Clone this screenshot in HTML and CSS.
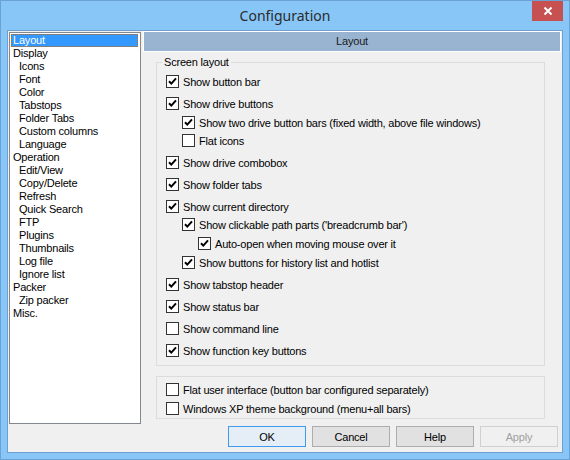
FILE: index.html
```html
<!DOCTYPE html>
<html>
<head>
<meta charset="utf-8">
<title>Configuration</title>
<link rel="stylesheet" href="styles.css">
</head>
<body>
<div class="window">
  <div class="titlebar">
    <span class="title">Configuration</span>
    <div class="close"><svg viewBox="0 0 10 10" width="10" height="10"><path d="M1.5 1.5L8.5 8.5M8.5 1.5L1.5 8.5"/></svg></div>
  </div>
  <div class="client">
    <ul class="tree">
      <li class="item selected">Layout</li>
      <li class="item">Display</li>
      <li class="item child">Icons</li>
      <li class="item child">Font</li>
      <li class="item child">Color</li>
      <li class="item child">Tabstops</li>
      <li class="item child">Folder Tabs</li>
      <li class="item child">Custom columns</li>
      <li class="item child">Language</li>
      <li class="item">Operation</li>
      <li class="item child">Edit/View</li>
      <li class="item child">Copy/Delete</li>
      <li class="item child">Refresh</li>
      <li class="item child">Quick Search</li>
      <li class="item child">FTP</li>
      <li class="item child">Plugins</li>
      <li class="item child">Thumbnails</li>
      <li class="item child">Log file</li>
      <li class="item child">Ignore list</li>
      <li class="item">Packer</li>
      <li class="item child">Zip packer</li>
      <li class="item">Misc.</li>
    </ul>
    <div class="page">
      <div class="page-header">Layout</div>
      <fieldset class="group group-screen">
        <legend>Screen layout</legend>
        <label class="row first"><span class="box"><svg viewBox="0 0 11 11"><path d="M2 5.2L4.3 7.6L9 2.3"/></svg></span>Show button bar</label>
        <label class="row"><span class="box"><svg viewBox="0 0 11 11"><path d="M2 5.2L4.3 7.6L9 2.3"/></svg></span>Show drive buttons</label>
        <label class="row sub lvl2"><span class="box"><svg viewBox="0 0 11 11"><path d="M2 5.2L4.3 7.6L9 2.3"/></svg></span>Show two drive button bars (fixed width, above file windows)</label>
        <label class="row sub tight lvl2"><span class="box"></span>Flat icons</label>
        <label class="row"><span class="box"><svg viewBox="0 0 11 11"><path d="M2 5.2L4.3 7.6L9 2.3"/></svg></span>Show drive combobox</label>
        <label class="row"><span class="box"><svg viewBox="0 0 11 11"><path d="M2 5.2L4.3 7.6L9 2.3"/></svg></span>Show folder tabs</label>
        <label class="row"><span class="box"><svg viewBox="0 0 11 11"><path d="M2 5.2L4.3 7.6L9 2.3"/></svg></span>Show current directory</label>
        <label class="row sub tight lvl2"><span class="box"><svg viewBox="0 0 11 11"><path d="M2 5.2L4.3 7.6L9 2.3"/></svg></span>Show clickable path parts ('breadcrumb bar')</label>
        <label class="row sub lvl3"><span class="box"><svg viewBox="0 0 11 11"><path d="M2 5.2L4.3 7.6L9 2.3"/></svg></span>Auto-open when moving mouse over it</label>
        <label class="row sub lvl2"><span class="box"><svg viewBox="0 0 11 11"><path d="M2 5.2L4.3 7.6L9 2.3"/></svg></span>Show buttons for history list and hotlist</label>
        <label class="row"><span class="box"><svg viewBox="0 0 11 11"><path d="M2 5.2L4.3 7.6L9 2.3"/></svg></span>Show tabstop header</label>
        <label class="row"><span class="box"><svg viewBox="0 0 11 11"><path d="M2 5.2L4.3 7.6L9 2.3"/></svg></span>Show status bar</label>
        <label class="row"><span class="box"></span>Show command line</label>
        <label class="row"><span class="box"><svg viewBox="0 0 11 11"><path d="M2 5.2L4.3 7.6L9 2.3"/></svg></span>Show function key buttons</label>
      </fieldset>
      <div class="group group-misc">
        <label class="row first"><span class="box"></span>Flat user interface (button bar configured separately)</label>
        <label class="row sub"><span class="box"></span>Windows XP theme background (menu+all bars)</label>
      </div>
      <div class="buttons">
        <button class="btn default">OK</button>
        <button class="btn">Cancel</button>
        <button class="btn">Help</button>
        <button class="btn disabled">Apply</button>
      </div>
    </div>
  </div>
</div>
</body>
</html>
```
FILE: styles.css
```css
* { box-sizing: border-box; }
html, body { margin: 0; padding: 0; }
body {
  width: 570px;
  height: 460px;
  overflow: hidden;
  font-family: "Liberation Sans", Arial, sans-serif;
  font-size: 11px;
  letter-spacing: -0.2px;
  color: #000;
}
.window {
  width: 570px;
  height: 460px;
  background: #88c6f7;
  border: 1px solid #6aa2d6;
  display: flex;
  flex-direction: column;
}
.titlebar {
  height: 29px;
  flex: none;
  display: flex;
  justify-content: center;
  align-items: center;
  position: relative;
}
.title {
  font-family: "Noto Sans", "Open Sans", sans-serif;
  font-size: 14px;
  letter-spacing: 0;
  color: #2b2b2b;
  margin-bottom: 1px;
}
.close {
  position: absolute;
  top: 0;
  right: 6px;
  width: 31px;
  height: 20px;
  background: #c75050;
  display: flex;
  align-items: center;
  justify-content: center;
}
.close svg path {
  stroke: #fff;
  stroke-width: 2;
  fill: none;
}
.client {
  margin: 0 6px;
  height: 423px;
  border: 1px solid #6e9fcf;
  background: #f0f0f0;
  display: flex;
  align-items: flex-start;
}
.tree {
  list-style: none;
  margin: 1px 2px 0 1px;
  padding: 1px 2px 0 1px;
  width: 132px;
  height: 392px;
  background: #fff;
  border: 1px solid #828790;
  flex: none;
}
.item {
  height: 13px;
  line-height: 13px;
  padding-left: 2px;
  white-space: nowrap;
}
.item.child { padding-left: 8px; }
.item.selected {
  background: #3399ff;
  color: #fff;
  outline: 1px dotted #cc6600;
  outline-offset: -1px;
}
.page {
  flex: 1;
  display: flex;
  flex-direction: column;
}
.page-header {
  height: 21px;
  margin-right: 1px;
  background: #99b4d1;
  border: 1px solid #fff;
  text-align: center;
  line-height: 19px;
  color: #1a1a1a;
}
.group {
  margin: 0 17px 0 13px;
  border: 1px solid #dcdcdc;
  min-width: 0;
}
.group-screen {
  margin-top: 4px;
  padding: 0 0 6px 9px;
}
.group-screen legend {
  padding: 0 2px;
  margin-left: -4px;
  line-height: 13px;
}
.group-misc {
  margin-top: 10px;
  padding: 0 0 1px 9px;
}
.row {
  display: flex;
  align-items: center;
  height: 17px;
  margin-top: 5px;
  white-space: nowrap;
}
.row.first { margin-top: 4px; }
.row.sub { margin-top: 2px; }
.row.tight { margin-top: 1px; }
.row.lvl2 { padding-left: 16px; }
.row.lvl3 { padding-left: 32px; }
.box {
  width: 13px;
  height: 13px;
  flex: none;
  border: 1px solid #333;
  background: #fff;
  margin-right: 4px;
  display: flex;
}
.box svg {
  width: 11px;
  height: 11px;
}
.box svg path {
  fill: none;
  stroke: #000;
  stroke-width: 2;
}
.buttons {
  display: flex;
  justify-content: flex-end;
  gap: 6px;
  margin-top: 7px;
  margin-right: 4px;
}
.btn {
  width: 78px;
  height: 21px;
  font-family: "Liberation Sans", Arial, sans-serif;
  font-size: 11px;
  letter-spacing: -0.2px;
  color: #000;
  background: #e1e1e1;
  border: 1px solid #adadad;
  padding: 0;
  border-radius: 0;
}
.btn.default { border-color: #3c9af0; background: #e5eef7; }
.btn.disabled { color: #a0a0a0; background: #f0f0f0; border-color: #d0d0d0; }
```
